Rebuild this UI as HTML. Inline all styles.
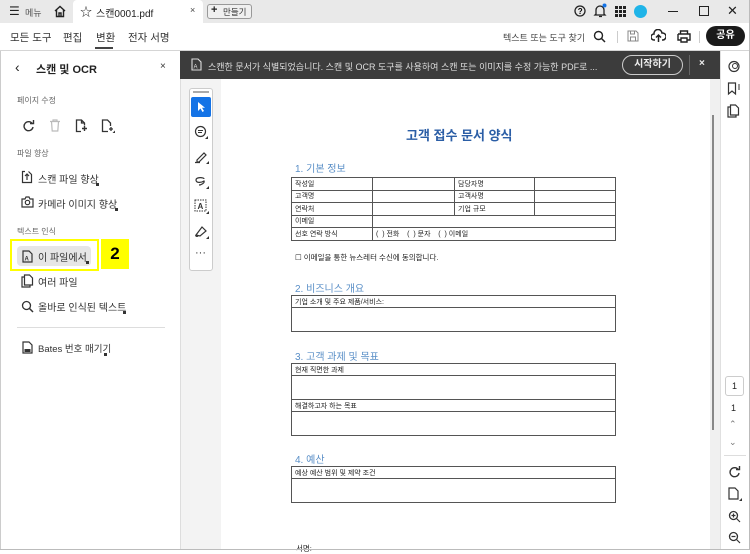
<!DOCTYPE html>
<html><head><meta charset="utf-8">
<style>
*{box-sizing:border-box;margin:0;padding:0}
body{width:750px;height:550px;overflow:hidden;background:#fff;font-family:"Liberation Sans","Noto Sans CJK KR",sans-serif;color:#222;position:relative}
.abs{position:absolute}
.t{position:absolute;white-space:nowrap}
svg{position:absolute}
.doc td{border:1px solid #555;font-size:7px;height:12.5px;padding:0 3px;color:#222}
.h2{position:absolute;font-size:10px;color:#5a8fc7;white-space:nowrap}
.box{position:absolute;border:1.5px solid #555;left:291px;width:325px}
.box .r{height:12px;border-bottom:1px solid #555;font-size:7px;padding:1px 3px;color:#222}
.sb{font-size:10px;color:#333}
.sec{font-size:8px;color:#666}
</style></head><body>
<div class="abs" style="left:0;top:0;width:750px;height:23px;background:#e9e9e9"></div>
<div class="abs" style="left:73px;top:0;width:130px;height:23px;background:#fff;border-radius:4px 4px 0 0"></div>
<div class="t" style="left:9px;top:4px;font-size:12px">☰</div>
<div class="t" style="left:25px;top:6px;font-size:9px;color:#555">메뉴</div>
<svg style="left:53px;top:5px" width="14" height="13" viewBox="0 0 14 13"><path d="M2 6L7 1.5 12 6M3.5 5v6.5h7V5M6 11.5V8h2v3.5" fill="none" stroke="#222" stroke-width="1.4"/></svg>
<div class="t" style="left:80px;top:3px;font-size:12px">☆</div>
<div class="t" style="left:96px;top:5px;font-size:10px">스캔0001.pdf</div>
<div class="t" style="left:190px;top:5px;font-size:9px;color:#444">×</div>
<div class="abs" style="left:207px;top:4px;width:45px;height:15px;border:1px solid #999;border-radius:3px;background:#f0f0f0"></div>
<div class="t" style="left:211px;top:4px;font-size:11px;font-weight:bold">+</div>
<div class="t" style="left:223px;top:6px;font-size:8.5px;color:#333">만들기</div>
<svg style="left:574px;top:5px" width="12" height="12"><circle cx="6" cy="6" r="5" fill="none" stroke="#222" stroke-width="1.3"/><text x="3.8" y="9" font-size="8" font-family="Liberation Sans" font-weight="bold">?</text></svg>
<svg style="left:593px;top:3px" width="14" height="15"><path d="M3 11V7a4 4 0 0 1 8 0v4l1 1H2zM6 13.5h3" fill="none" stroke="#222" stroke-width="1.3"/><circle cx="11.5" cy="2.5" r="2" fill="#1473e6"/></svg>
<svg style="left:615px;top:6px" width="11" height="11"><g fill="#222"><rect x="0" y="0" width="3" height="3"/><rect x="4" y="0" width="3" height="3"/><rect x="8" y="0" width="3" height="3"/><rect x="0" y="4" width="3" height="3"/><rect x="4" y="4" width="3" height="3"/><rect x="8" y="4" width="3" height="3"/><rect x="0" y="8" width="3" height="3"/><rect x="4" y="8" width="3" height="3"/><rect x="8" y="8" width="3" height="3"/></g></svg>
<div class="abs" style="left:634px;top:5px;width:13px;height:13px;border-radius:50%;background:#1fb4e8"></div>
<div class="abs" style="left:668px;top:11px;width:10px;height:1.3px;background:#222"></div>
<div class="abs" style="left:699px;top:6px;width:10px;height:10px;border:1.2px solid #222"></div>
<div class="t" style="left:727px;top:3px;font-size:13px">✕</div>
<div class="t" style="left:10px;top:30px;font-size:10.5px;color:#333">모든 도구</div>
<div class="t" style="left:63px;top:30px;font-size:10.5px;color:#333">편집</div>
<div class="t" style="left:96px;top:30px;font-size:10.5px;color:#333">변환</div>
<div class="abs" style="left:95px;top:47px;width:18px;height:2px;background:#444"></div>
<div class="t" style="left:128px;top:30px;font-size:10.5px;color:#333">전자 서명</div>
<div class="t" style="left:503px;top:31px;font-size:9px;color:#444">텍스트 또는 도구 찾기</div>
<svg style="left:593px;top:30px" width="13" height="13"><circle cx="5.5" cy="5.5" r="4" fill="none" stroke="#222" stroke-width="1.4"/><path d="M8.5 8.5L12 12" stroke="#222" stroke-width="1.5"/></svg>
<div class="abs" style="left:617px;top:31px;width:1px;height:12px;background:#ccc"></div>
<svg style="left:627px;top:30px" width="12" height="12"><path d="M1 1h8l2 2v8H1z M3.5 1v3h4V1 M3.5 11V7h5v4" fill="none" stroke="#888" stroke-width="1"/></svg>
<svg style="left:651px;top:29px" width="15" height="14"><path d="M4 11H3a3 3 0 0 1 0-6 4 4 0 0 1 8-1 3 3 0 0 1 1 7h-1M7.5 13V6M5 8.5l2.5-2.5 2.5 2.5" fill="none" stroke="#222" stroke-width="1.5"/></svg>
<svg style="left:677px;top:30px" width="14" height="13"><path d="M3.5 4V1h7v3M1 4h12v6h-3M4 10H1V4M4 8h6v4H4z" fill="none" stroke="#222" stroke-width="1.4"/></svg>
<div class="abs" style="left:699px;top:31px;width:1px;height:12px;background:#ccc"></div>
<div class="abs" style="left:706px;top:26px;width:39px;height:20px;border-radius:10px;background:#1a1a1a;color:#fff;font-size:10px;font-weight:bold;text-align:center;line-height:20px">공유</div>
<div class="abs" style="left:0;top:50px;width:750px;height:1px;background:#d5d5d5"></div>
<div class="abs" style="left:0;top:51px;width:1px;height:499px;background:#ccc"></div>
<div class="abs" style="left:180px;top:51px;width:1px;height:499px;background:#ddd"></div>
<div class="t" style="left:15px;top:59px;font-size:14px;color:#222">‹</div>
<div class="t" style="left:36px;top:61px;font-size:11px;font-weight:bold;color:#222">스캔 및 OCR</div>
<div class="t" style="left:160px;top:61px;font-size:10px;color:#333">×</div>
<div class="t sec" style="left:17px;top:95px">페이지 수정</div>
<svg style="left:22px;top:119px" width="13" height="13"><path d="M10.5 5A4.5 4.5 0 1 0 11 8" fill="none" stroke="#333" stroke-width="1.4"/><path d="M8 4.5h3.5V1" fill="none" stroke="#333" stroke-width="1.4"/></svg>
<svg style="left:49px;top:119px" width="12" height="13"><path d="M1 2.5h10M4 2.5V1h4v1.5M2.5 2.5l.7 9.5h5.6l.7-9.5" fill="none" stroke="#bbb" stroke-width="1.2"/></svg>
<svg style="left:75px;top:119px" width="13" height="14"><path d="M6 12.5H1.5V1h5l3 3v2.5M6.5 1v3h3" fill="none" stroke="#333" stroke-width="1.3"/><path d="M7 9.5h5M9.5 7v5" stroke="#333" stroke-width="1.4"/></svg>
<svg style="left:101px;top:119px" width="15" height="15"><path d="M7 12.5H1.5V1h5l3 3v3" fill="none" stroke="#333" stroke-width="1.3"/><path d="M8 10h4M10 8v4" stroke="#333" stroke-width="1.3"/><path d="M14 14h-2.5l2.5-2.5z" fill="#333"/></svg>
<div class="t sec" style="left:17px;top:148px">파일 향상</div>
<svg style="left:21px;top:170px" width="13" height="14"><path d="M4 1.5H1.5v11h9V4.5L7.5 1.5" fill="none" stroke="#333" stroke-width="1.2"/><path d="M6 4v6M4 6l2-2 2 2" fill="none" stroke="#333" stroke-width="1.2"/></svg>
<div class="t sb" style="left:38px;top:171px">스캔 파일 향상</div>
<div class="abs" style="left:96px;top:183px;width:3px;height:3px;background:#333"></div>
<svg style="left:21px;top:196px" width="13" height="12"><path d="M1 3h3l1-2h3l1 2h3v8H1z" fill="none" stroke="#333" stroke-width="1.2"/><circle cx="6.5" cy="6.5" r="2.2" fill="none" stroke="#333" stroke-width="1.2"/></svg>
<div class="t sb" style="left:38px;top:196px">카메라 이미지 향상</div>
<div class="abs" style="left:115px;top:208px;width:3px;height:3px;background:#333"></div>
<div class="t sec" style="left:17px;top:226px">텍스트 인식</div>
<div class="abs" style="left:10px;top:239px;width:89px;height:32px;border:2px solid #ffff00"></div>
<div class="abs" style="left:101px;top:239px;width:28px;height:30px;background:#ffff00;font-size:17px;font-weight:bold;text-align:center;line-height:30px;color:#000">2</div>
<div class="abs" style="left:17px;top:246px;width:74px;height:20px;background:#e6e6e6;border-radius:4px"></div>
<svg style="left:22px;top:250px" width="11" height="13"><path d="M1 1h6l3 3v8H1z" fill="none" stroke="#333" stroke-width="1.2"/><text x="2.5" y="10.5" font-size="6" font-family="Liberation Sans" font-weight="bold" fill="#333">A</text></svg>
<div class="t sb" style="left:38px;top:249px">이 파일에서</div>
<div class="abs" style="left:86px;top:261px;width:3px;height:3px;background:#333"></div>
<svg style="left:21px;top:274px" width="13" height="14"><path d="M3 3H1v10h8v-2" fill="none" stroke="#333" stroke-width="1.2"/><path d="M3.5 1h5l3 3v7h-8z" fill="none" stroke="#333" stroke-width="1.2"/></svg>
<div class="t sb" style="left:38px;top:274px">여러 파일</div>
<svg style="left:21px;top:300px" width="13" height="13"><circle cx="5.5" cy="5.5" r="4" fill="none" stroke="#333" stroke-width="1.3"/><path d="M8.5 8.5L12 12" stroke="#333" stroke-width="1.5"/></svg>
<div class="t sb" style="left:38px;top:299px">올바로 인식된 텍스트</div>
<div class="abs" style="left:123px;top:311px;width:3px;height:3px;background:#333"></div>
<div class="abs" style="left:17px;top:327px;width:148px;height:1px;background:#ddd"></div>
<svg style="left:22px;top:341px" width="11" height="13"><path d="M1 1h6l3 3v8H1z" fill="none" stroke="#333" stroke-width="1.2"/><rect x="2.5" y="8" width="6" height="3" fill="#333"/></svg>
<div class="t sb" style="left:38px;top:341px;font-size:9.5px">Bates 번호 매기기</div>
<div class="abs" style="left:104px;top:353px;width:3px;height:3px;background:#333"></div>
<div class="abs" style="left:181px;top:79px;width:539px;height:471px;background:#f3f3f3"></div>
<div class="abs" style="left:221px;top:79px;width:489px;height:471px;background:#fff"></div>
<div class="abs" style="left:710px;top:79px;width:10px;height:471px;background:#f0f0f0"></div>
<div class="abs" style="left:712px;top:115px;width:2px;height:315px;background:#888"></div>
<div class="abs" style="left:180px;top:51px;width:540px;height:28px;background:#3c3c3c"></div>
<svg style="left:191px;top:58px" width="11" height="13"><path d="M1 1h6l3 3v8H1z" fill="none" stroke="#ddd" stroke-width="1.1"/><text x="2.5" y="10.5" font-size="6" font-family="Liberation Sans" fill="#ddd">A</text></svg>
<div class="t" style="left:208px;top:60px;font-size:9px;color:#ddd">스캔한 문서가 식별되었습니다. 스캔 및 OCR 도구를 사용하여 스캔 또는 이미지를 수정 가능한 PDF로 ...</div>
<div class="abs" style="left:622px;top:55px;width:61px;height:20px;border:1.5px solid #ccc;border-radius:10px;color:#eee;font-size:10px;font-weight:bold;text-align:center;line-height:17px">시작하기</div>
<div class="abs" style="left:689px;top:55px;width:1px;height:20px;background:#666"></div>
<div class="t" style="left:699px;top:58px;font-size:10px;color:#eee;font-weight:bold">×</div>
<div class="abs" style="left:189px;top:88px;width:24px;height:183px;background:#fff;border:1px solid #ccc;border-radius:3px"></div>
<div class="abs" style="left:193px;top:91px;width:16px;height:2px;background:#aaa"></div>
<div class="abs" style="left:191px;top:97px;width:20px;height:20px;background:#1473e6;border-radius:2px"></div>
<svg style="left:197px;top:101px" width="9" height="12"><path d="M1 1v9l2.5-2.5 2 3.5 1.5-1-2-3.3H8z" fill="#fff"/></svg>
<svg style="left:194px;top:125px" width="15" height="14"><circle cx="6.5" cy="6.5" r="5" fill="none" stroke="#333" stroke-width="1.2"/><path d="M4 5.5h5M4 7.5h4" stroke="#333"/><path d="M14 14h-3l3-3z" fill="#333"/></svg>
<svg style="left:194px;top:149px" width="15" height="15"><path d="M3 11l7-7 2 2-7 7H3zM1 13.5h5" fill="none" stroke="#333" stroke-width="1.2"/><path d="M15 15h-3l3-3z" fill="#333"/></svg>
<svg style="left:194px;top:174px" width="15" height="15"><path d="M10 5c0-2-8-2-8 1s5 3 8 1c1 2-3 4-5 4" fill="none" stroke="#333" stroke-width="1.2"/><path d="M15 15h-3l3-3z" fill="#333"/></svg>
<svg style="left:194px;top:199px" width="15" height="15"><rect x="1" y="1" width="11" height="11" fill="none" stroke="#333" stroke-dasharray="1.5 1"/><text x="3.5" y="10" font-size="8" font-family="Liberation Sans" font-weight="bold" fill="#333">A</text><path d="M15 15h-3l3-3z" fill="#333"/></svg>
<svg style="left:194px;top:224px" width="15" height="15"><path d="M2 11l6-8 4 4-6 5zM2 11c-1 1 1 2 2 1" fill="none" stroke="#333" stroke-width="1.2"/><path d="M15 15h-3l3-3z" fill="#333"/></svg>
<div class="t" style="left:195px;top:247px;font-size:11px;color:#333">···</div>
<div class="t" style="left:406px;top:125px;font-size:13px;font-weight:bold;color:#2b5ea6">고객 접수 문서 양식</div>
<div class="h2" style="left:295px;top:160px">1. 기본 정보</div>
<table class="doc abs" style="left:291px;top:177px;width:325px;border-collapse:collapse;border:1.5px solid #555">
<tr><td style="width:81px">작성일</td><td style="width:82px"></td><td style="width:80px">담당자명</td><td></td></tr>
<tr><td>고객명</td><td></td><td>고객사명</td><td></td></tr>
<tr><td>연락처</td><td></td><td>기업 규모</td><td></td></tr>
<tr><td>이메일</td><td colspan="3"></td></tr>
<tr><td>선호 연락 방식</td><td colspan="3">(&nbsp;&nbsp;) 전화 &nbsp;&nbsp; (&nbsp;&nbsp;) 문자 &nbsp;&nbsp; (&nbsp;&nbsp;) 이메일</td></tr>
</table>
<div class="t" style="left:295px;top:252px;font-size:7.5px">☐ 이메일을 통한 뉴스레터 수신에 동의합니다.</div>
<div class="h2" style="left:295px;top:280px">2. 비즈니스 개요</div>
<div class="box" style="top:295px;height:37px"><div class="r">기업 소개 및 주요 제품/서비스:</div></div>
<div class="h2" style="left:295px;top:348px">3. 고객 과제 및 목표</div>
<div class="box" style="top:363px;height:73px"><div class="r">현재 직면한 과제</div><div style="height:24px;border-bottom:1px solid #555"></div><div class="r">해결하고자 하는 목표</div></div>
<div class="h2" style="left:295px;top:451px">4. 예산</div>
<div class="box" style="top:466px;height:37px"><div class="r">예상 예산 범위 및 제약 조건</div></div>
<div class="t" style="left:296px;top:543px;font-size:7.5px">서명:</div>
<div class="abs" style="left:720px;top:51px;width:1px;height:499px;background:#e0e0e0"></div>
<div class="abs" style="left:749px;top:0;width:1px;height:550px;background:#bbb"></div>
<svg style="left:727px;top:60px" width="14" height="13"><circle cx="7" cy="6.5" r="5" fill="none" stroke="#333" stroke-width="1.2"/><circle cx="8" cy="6" r="2.5" fill="none" stroke="#333"/></svg>
<svg style="left:727px;top:82px" width="14" height="14"><path d="M1.5 1h7v11l-3.5-3-3.5 3z" fill="none" stroke="#333" stroke-width="1.2"/><path d="M11 3h2M11 5h2M11 7h2" stroke="#333"/></svg>
<svg style="left:727px;top:104px" width="14" height="14"><path d="M3 3H1v10h8v-2" fill="none" stroke="#333" stroke-width="1.2"/><path d="M3.5 1h5l3 3v7h-8z" fill="none" stroke="#333" stroke-width="1.2"/></svg>
<div class="abs" style="left:725px;top:376px;width:19px;height:20px;border:1px solid #ccc;border-radius:3px;font-size:9px;text-align:center;line-height:18px">1</div>
<div class="t" style="left:731px;top:403px;font-size:9px">1</div>
<div class="t" style="left:729px;top:419px;font-size:9px;color:#777">⌃</div>
<div class="t" style="left:729px;top:437px;font-size:9px;color:#777">⌄</div>
<div class="abs" style="left:724px;top:455px;width:22px;height:1px;background:#ddd"></div>
<svg style="left:728px;top:465px" width="13" height="13"><path d="M10.5 5A4.5 4.5 0 1 0 11 8" fill="none" stroke="#333" stroke-width="1.4"/><path d="M8 4.5h3.5V1" fill="none" stroke="#333" stroke-width="1.4"/></svg>
<svg style="left:728px;top:487px" width="15" height="15"><path d="M1 1h6l3 3v8H1z" fill="none" stroke="#333" stroke-width="1.2"/><path d="M14 14h-3l3-3z" fill="#333"/></svg>
<svg style="left:728px;top:510px" width="13" height="13"><circle cx="5.5" cy="5.5" r="4" fill="none" stroke="#333" stroke-width="1.3"/><path d="M8.5 8.5L12 12M3.5 5.5h4M5.5 3.5v4" stroke="#333" stroke-width="1.2"/></svg>
<svg style="left:728px;top:531px" width="13" height="13"><circle cx="5.5" cy="5.5" r="4" fill="none" stroke="#333" stroke-width="1.3"/><path d="M8.5 8.5L12 12M3.5 5.5h4" stroke="#333" stroke-width="1.2"/></svg>
<div class="abs" style="left:0;top:549px;width:750px;height:1px;background:#bbb"></div>
</body></html>
